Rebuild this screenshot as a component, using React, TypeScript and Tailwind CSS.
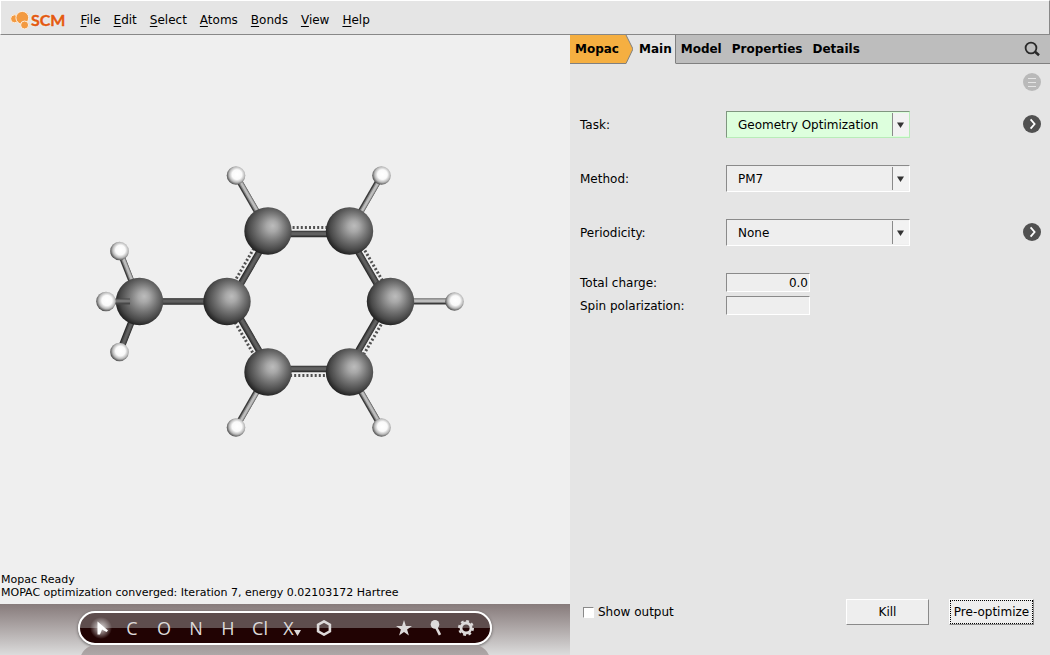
import React, { useState } from "react";

const menus = ["File", "Edit", "Select", "Atoms", "Bonds", "View", "Help"];
const tabs = ["Model", "Properties", "Details"];
const elements = ["C", "O", "N", "H", "Cl"];

type Point = [number, number];

const ring: Point[] = [
  [268, 231],
  [349.5, 231],
  [390.5, 301.5],
  [349.5, 372],
  [268, 372],
  [227, 301.5],
];
const ringCenter: Point = [309, 301.5];
const methyl: Point = [139.5, 301.5];

const hydrogens: { at: Point; to: Point; dark?: boolean }[] = [
  { at: [236, 175.5], to: ring[0] },
  { at: [381.5, 175.5], to: ring[1] },
  { at: [454.5, 301.5], to: ring[2] },
  { at: [381.5, 427.5], to: ring[3] },
  { at: [236, 427.5], to: ring[4] },
  { at: [119.5, 251], to: methyl },
  { at: [119.5, 352], to: methyl, dark: true },
];

// moves both ends sideways, positive is away from the ring center
function shift(a: Point, b: Point, distance: number): [Point, Point] {
  const mx = (a[0] + b[0]) / 2 - ringCenter[0];
  const my = (a[1] + b[1]) / 2 - ringCenter[1];
  const length = Math.hypot(mx, my);
  const dx = (mx / length) * distance;
  const dy = (my / length) * distance;
  return [
    [a[0] + dx, a[1] + dy],
    [b[0] + dx, b[1] + dy],
  ];
}

function Bond({ a, b, light }: { a: Point; b: Point; light?: boolean }) {
  const length = Math.hypot(b[0] - a[0], b[1] - a[1]);
  let nx = (b[1] - a[1]) / length;
  let ny = -(b[0] - a[0]) / length;
  // the light comes from the upper right
  if (nx - ny < 0) {
    nx = -nx;
    ny = -ny;
  }
  const layers = light
    ? [
        { color: "#3a3a3a", width: 6, offset: 0 },
        { color: "#858585", width: 4.4, offset: 0.6 },
        { color: "#bdbdbd", width: 2.4, offset: 0.8 },
      ]
    : [
        { color: "#2a2a2a", width: 6.6, offset: 0 },
        { color: "#484848", width: 5, offset: 0.3 },
        { color: "#606060", width: 2.6, offset: 0.4 },
      ];
  return (
    <g>
      {layers.map((l) => (
        <line
          key={l.color}
          x1={a[0] + nx * l.offset}
          y1={a[1] + ny * l.offset}
          x2={b[0] + nx * l.offset}
          y2={b[1] + ny * l.offset}
          stroke={l.color}
          strokeWidth={l.width}
        />
      ))}
    </g>
  );
}

function Molecule() {
  return (
    <svg viewBox="0 35 570 538" className="h-0 min-h-0 w-full flex-1" role="img" aria-label="Toluene">
      <defs>
        <radialGradient id="carbon" cx="0.55" cy="0.44" r="0.59" fx="0.6" fy="0.39">
          <stop offset="0" stopColor="#bcbcbc" />
          <stop offset="0.2" stopColor="#a8a8a8" />
          <stop offset="0.5" stopColor="#767676" />
          <stop offset="0.8" stopColor="#484848" />
          <stop offset="1" stopColor="#1a1a1a" />
        </radialGradient>
        <radialGradient id="hydrogen" cx="0.55" cy="0.45" r="0.58">
          <stop offset="0" stopColor="#ffffff" />
          <stop offset="0.45" stopColor="#fafafa" />
          <stop offset="0.72" stopColor="#bababa" />
          <stop offset="1" stopColor="#3c3c3c" />
        </radialGradient>
      </defs>
      {ring.map((a, i) => {
        const b = ring[(i + 1) % ring.length];
        const [s1, s2] = shift(a, b, -3);
        const [d1, d2] = shift(a, b, 3.5);
        return (
          <g key={i}>
            <Bond a={s1} b={s2} />
            <line
              x1={d1[0]}
              y1={d1[1]}
              x2={d2[0]}
              y2={d2[1]}
              stroke="#505050"
              strokeWidth={3}
              strokeDasharray="2 2.1"
            />
          </g>
        );
      })}
      <Bond a={methyl} b={ring[5]} />
      {hydrogens.map((h, i) => (
        <Bond key={i} a={h.at} b={h.to} light={!h.dark} />
      ))}
      {[...ring, methyl].map(([x, y]) => (
        <circle key={`${x},${y}`} cx={x} cy={y} r={23.7} fill="url(#carbon)" />
      ))}
      <line x1={106} y1={301.5} x2={130} y2={301.5} stroke="#484848" strokeWidth={6} />
      <line x1={106} y1={301} x2={130} y2={301} stroke="#777777" strokeWidth={3} />
      {hydrogens.map(({ at: [x, y] }) => (
        <circle key={`${x},${y}`} cx={x} cy={y} r={9.3} fill="url(#hydrogen)" />
      ))}
      <circle cx={106} cy={301.5} r={9.8} fill="url(#hydrogen)" />
    </svg>
  );
}

function Logo() {
  return (
    <a href="#" className="flex items-center">
      <svg width="22" height="20" viewBox="0 0 22 20" aria-hidden="true">
        <g fill="#f39a40" stroke="#fbeee0" strokeWidth="1">
          <circle cx="4.6" cy="8.8" r="4" />
          <circle cx="12.3" cy="7.8" r="6.4" />
          <circle cx="14.6" cy="15" r="4" />
        </g>
      </svg>
      <span className="-ml-px font-[Lato,sans-serif] text-[16px] leading-5 font-bold text-[#e35a10] [-webkit-text-stroke:0.4px_#e35a10] [text-shadow:0_0_2px_#fff]">
        SCM
      </span>
    </a>
  );
}

function Dropdown({ id, value, active }: { id: string; value: string; active?: boolean }) {
  return (
    <div className="relative w-[184px]">
      <select
        id={id}
        className={
          active
            ? "block h-[27px] w-full appearance-none border border-t-[#7f967f] border-r-[#b8ecb8] border-b-[#b8ecb8] border-l-[#7f967f] bg-[#ddffdd] pl-[11px] outline-none"
            : "block h-[27px] w-full appearance-none border border-t-[#8a8a8a] border-r-white border-b-white border-l-[#8a8a8a] bg-[#eeeeee] pl-[11px] outline-none"
        }
      >
        <option>{value}</option>
      </select>
      <span className="pointer-events-none absolute inset-y-[2px] right-[1px] flex w-[17px] items-center justify-center border-l border-[#8a8a8a] bg-[#f2f2f2] pr-px">
        <svg width="7" height="6" viewBox="0 0 7 6">
          <path d="M0 0.5H7L3.5 6Z" fill="#333333" />
        </svg>
      </span>
    </div>
  );
}

function MoreButton({ label }: { label: string }) {
  return (
    <button type="button" aria-label={label} className="mt-1 ml-auto self-start">
      <svg width="18" height="18" viewBox="0 0 18 18" className="block">
        <circle cx="9" cy="9" r="9" fill="#515151" />
        <path d="M7.6 4.4L11.6 9L7.6 13.6" fill="none" stroke="#ffffff" strokeWidth="1.8" />
      </svg>
    </button>
  );
}

function Toolbar() {
  return (
    <div className="relative h-[51px] overflow-hidden bg-linear-to-b from-[#877b7b] to-[#dcdcdc] pt-[7px]">
      <div className="mx-[78px] h-[34px] rounded-full border-2 border-white bg-linear-to-b from-[#5e4d4d] from-50% to-[#210303] to-50% shadow-[0_1px_3px_#00000080]">
        <div className="flex h-full items-center pl-3 font-['Open_Sans',sans-serif] text-[18px] leading-6 text-[#dddada]">
          <button type="button" aria-label="Select tool" className="w-6">
            <svg width="20" height="24" viewBox="0 0 20 24" className="overflow-visible">
              <defs>
                <radialGradient id="glow">
                  <stop offset="0" stopColor="#ffffff" stopOpacity="0.8" />
                  <stop offset="1" stopColor="#ffffff" stopOpacity="0" />
                </radialGradient>
              </defs>
              <circle cx="9" cy="12" r="11" fill="url(#glow)" />
              <path d="M5.5 5.5L16 14.5L14.5 16L10 13.5L8 18.5H5.5Z" fill="#ffffff" />
            </svg>
          </button>
          {elements.map((el) => (
            <button key={el} type="button" className="w-8 text-center">
              {el}
            </button>
          ))}
          <button type="button" aria-label="Other element" className="flex w-8 items-end justify-center">
            X
            <svg width="7" height="6" viewBox="0 0 7 6" className="mb-1">
              <path d="M0 0H7L3.5 6Z" fill="#dddada" />
            </svg>
          </button>
          <button type="button" aria-label="Ring" className="flex w-8 justify-center">
            <svg width="16" height="16" viewBox="0 0 16 16">
              <path d="M8 1.4L13.9 4.7V11.3L8 14.6L2.1 11.3V4.7Z" fill="none" stroke="#dddada" strokeWidth="2.6" />
            </svg>
          </button>
          <button type="button" aria-label="Favorites" className="ml-auto flex w-8 justify-center">
            <svg width="16" height="16" viewBox="0 0 16 16">
              <path d="M8 0L9.9 5.9H16L11.1 9.6L12.9 15.6L8 12L3.1 15.6L4.9 9.6L0 5.9H6.1Z" fill="#dddada" />
            </svg>
          </button>
          <button type="button" aria-label="Pin" className="flex w-8 justify-center">
            <svg width="16" height="16" viewBox="0 0 16 16">
              <circle cx="7" cy="4.4" r="4.3" fill="#dddada" />
              <path d="M8 7L12 14.8" stroke="#dddada" strokeWidth="2.6" />
            </svg>
          </button>
          <button type="button" aria-label="Settings" className="mr-[10px] flex w-7 justify-center">
            <svg width="16" height="16" viewBox="0 0 16 16">
              <circle cx="8" cy="8" r="5" fill="none" stroke="#dddada" strokeWidth="2.8" />
              <circle
                cx="8"
                cy="8"
                r="6.9"
                fill="none"
                stroke="#dddada"
                strokeWidth="2.2"
                strokeDasharray="2.8 2.62"
              />
            </svg>
          </button>
        </div>
      </div>
      <div className="mx-20 h-8 rounded-full bg-linear-to-b from-[#a29a9a] to-[#c8c4c4]" />
    </div>
  );
}

export default function App() {
  const [charge, setCharge] = useState("0.0");
  const [spin, setSpin] = useState("");
  const [showOutput, setShowOutput] = useState(false);

  return (
    <div className="flex min-h-screen flex-col bg-[#e5e5e5] font-['DejaVu_Sans',sans-serif] text-[12px] leading-4 text-black">
      <header className="flex h-[35px] items-center border border-t-white border-r-[#888888] border-b-[#888888] border-l-white pt-1 pl-[9px]">
        <Logo />
        <nav className="ml-[15px] flex gap-[13px]">
          {menus.map((m) => (
            <button key={m} type="button">
              <span className="underline underline-offset-2">{m[0]}</span>
              {m.slice(1)}
            </button>
          ))}
        </nav>
      </header>

      <main className="flex flex-1">
        <section className="flex min-w-0 flex-1 flex-col bg-[#efefef]">
          <Molecule />
          <div className="pb-[5px] pl-px text-[11px] leading-[13px]">
            <p>Mopac Ready</p>
            <p>MOPAC optimization converged: Iteration 7, energy 0.02103172 Hartree</p>
          </div>
          <Toolbar />
        </section>

        <section className="flex w-[480px] flex-col">
          <div className="flex h-[29px] items-stretch bg-[#bdbdbd] font-bold">
            <button type="button" className="border-b border-[#808080] bg-[#f5af41] pl-[5px]">
              Mopac
            </button>
            <svg width="14" height="29" viewBox="0 0 14 29" aria-hidden="true">
              <path d="M0 0H14V29H0Z" fill="#e5e5e5" />
              <path d="M0 0H7L14 14L7 29H0Z" fill="#f5af41" />
              <path d="M7 0L14 14L7 28.5H0" fill="none" stroke="#808080" />
            </svg>
            <button
              type="button"
              className="border-r border-b border-r-[#808080] border-b-[#e5e5e5] bg-[#e5e5e5] pr-[3px] pl-[6px]"
            >
              Main
            </button>
            <div className="flex flex-1 gap-[10px] border-b border-[#808080] pr-[9px] pl-[5px]">
              {tabs.map((t) => (
                <button key={t} type="button">
                  {t}
                </button>
              ))}
              <button type="button" aria-label="Search" className="ml-auto">
                <svg width="17" height="16" viewBox="0 0 17 16">
                  <circle cx="7" cy="7" r="5.4" fill="none" stroke="#2a2a2a" strokeWidth="1.8" />
                  <path d="M10.8 10.5L15 14.2" stroke="#2a2a2a" strokeWidth="2.6" />
                </svg>
              </button>
            </div>
          </div>

          <form
            onSubmit={(e) => e.preventDefault()}
            className="flex flex-1 flex-col pt-[9px] pr-[9px] pb-[30px] pl-[10px]"
          >
            <button type="button" aria-label="Options" className="self-end">
              <svg width="18" height="18" viewBox="0 0 18 18" className="block">
                <circle cx="9" cy="9" r="9" fill="#b9b9b9" />
                <path d="M5 5.5H13M5 9.5H13M5 13.5H13" stroke="#e5e5e5" />
              </svg>
            </button>

            <div className="mt-5 flex flex-col gap-[27px]">
              <div className="flex items-center">
                <label htmlFor="task" className="w-[146px]">
                  Task:
                </label>
                <Dropdown id="task" value="Geometry Optimization" active />
                <MoreButton label="Task details" />
              </div>
              <div className="flex items-center">
                <label htmlFor="method" className="w-[146px]">
                  Method:
                </label>
                <Dropdown id="method" value="PM7" />
              </div>
              <div className="flex items-center">
                <label htmlFor="periodicity" className="w-[146px]">
                  Periodicity:
                </label>
                <Dropdown id="periodicity" value="None" />
                <MoreButton label="Periodicity details" />
              </div>
              <div className="flex flex-col gap-1">
                <div className="flex items-center">
                  <label htmlFor="charge" className="w-[146px]">
                    Total charge:
                  </label>
                  <input
                    id="charge"
                    value={charge}
                    onChange={(e) => setCharge(e.target.value)}
                    className="h-[19px] w-[84px] border border-t-[#8a8a8a] border-r-white border-b-white border-l-[#8a8a8a] bg-[#eeeeee] px-px text-right outline-none"
                  />
                </div>
                <div className="flex items-center">
                  <label htmlFor="spin" className="w-[146px]">
                    Spin polarization:
                  </label>
                  <input
                    id="spin"
                    value={spin}
                    onChange={(e) => setSpin(e.target.value)}
                    className="h-[19px] w-[84px] border border-t-[#8a8a8a] border-r-white border-b-white border-l-[#8a8a8a] bg-[#eeeeee] px-px text-right outline-none"
                  />
                </div>
              </div>
            </div>

            <div className="mt-auto flex items-center pr-[7px] pl-[3px]">
              <label className="flex items-center gap-1">
                <input
                  type="checkbox"
                  checked={showOutput}
                  onChange={(e) => setShowOutput(e.target.checked)}
                  className="size-[11px] appearance-none border border-t-[#8a8a8a] border-r-white border-b-white border-l-[#8a8a8a] bg-white checked:bg-[#515151]"
                />
                Show output
              </label>
              <button
                type="button"
                className="ml-auto h-[26px] w-[83px] border border-t-white border-r-[#8a8a8a] border-b-[#8a8a8a] border-l-white bg-[#eeeeee]"
              >
                Kill
              </button>
              <div className="ml-5 border border-t-white border-r-[#8a8a8a] border-b-[#8a8a8a] border-l-white">
                <button
                  type="submit"
                  className="block h-6 w-[83px] border border-dotted border-black bg-[#eeeeee]"
                >
                  Pre-optimize
                </button>
              </div>
            </div>
          </form>
        </section>
      </main>
    </div>
  );
}
